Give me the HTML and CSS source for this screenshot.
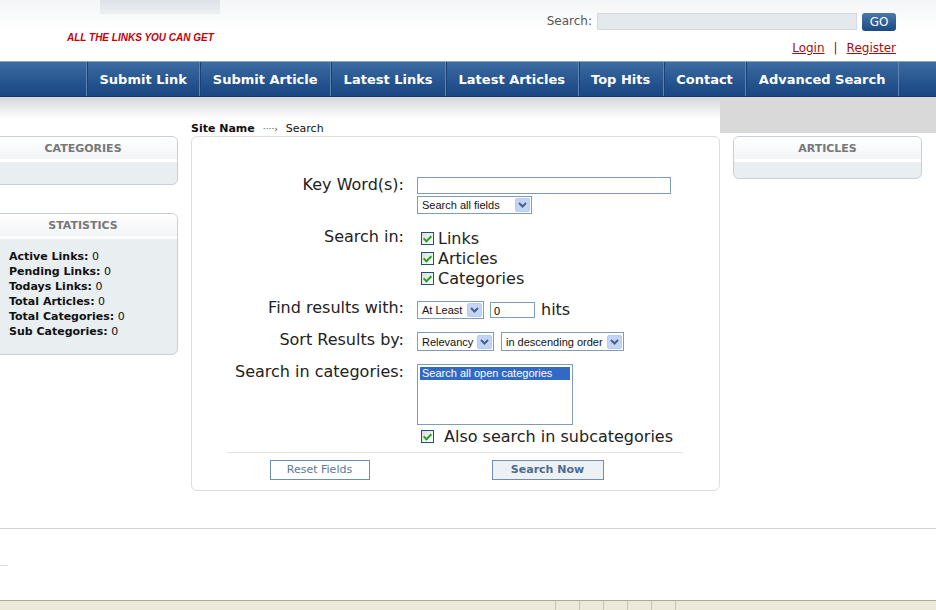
FILE: index.html
```html
<!DOCTYPE html>
<html lang="en">
<head>
  <meta charset="UTF-8" />
  <meta name="viewport" content="width=device-width, initial-scale=1.0" />
  <title>Search</title>
  <link rel="stylesheet" href="styles.css">
</head>
<body>
  <!-- ─── header ───────────────────────────── -->
  <div class="header">
    <div class="brand">
      <div class="brand-tab"></div>
      <div class="tagline">ALL THE LINKS YOU CAN GET</div>
    </div>
    <div class="top-right">
      <form class="quick-search">
        <label>Search:</label>
        <input type="text" class="quick-input">
        <button type="button" class="go-btn">GO</button>
      </form>
      <div class="account">
        <a href="#">Login</a><span class="pipe">|</span><a href="#">Register</a>
      </div>
    </div>
  </div>

  <!-- ─── navigation ───────────────────────── -->
  <div class="nav">
    <ul>
      <li><a href="#">Submit Link</a></li>
      <li><a href="#">Submit Article</a></li>
      <li><a href="#">Latest Links</a></li>
      <li><a href="#">Latest Articles</a></li>
      <li><a href="#">Top Hits</a></li>
      <li><a href="#">Contact</a></li>
      <li><a href="#">Advanced Search</a></li>
    </ul>
  </div>

  <!-- ─── content ──────────────────────────── -->
  <div class="content">
    <div class="left-col">
      <div class="side-box">
        <div class="side-head">CATEGORIES</div>
        <div class="side-body empty"></div>
      </div>
      <div class="side-box">
        <div class="side-head">STATISTICS</div>
        <div class="side-body stats">
          <div><b>Active Links:</b> 0</div>
          <div><b>Pending Links:</b> 0</div>
          <div><b>Todays Links:</b> 0</div>
          <div><b>Total Articles:</b> 0</div>
          <div><b>Total Categories:</b> 0</div>
          <div><b>Sub Categories:</b> 0</div>
        </div>
      </div>
    </div>

    <div class="main-col">
      <div class="crumbs"><b>Site Name</b><span class="arrow">····›</span>Search</div>
      <div class="main-box">
        <div class="row">
          <div class="label">Key Word(s):</div>
          <div class="field">
            <input type="text" class="text-input keywords">
            <div class="select fields-select"><span>Search all fields</span><i class="drop"></i></div>
          </div>
        </div>

        <div class="row search-in">
          <div class="label">Search in:</div>
          <div class="field">
            <div class="check-line"><span class="check"></span>Links</div>
            <div class="check-line"><span class="check"></span>Articles</div>
            <div class="check-line"><span class="check"></span>Categories</div>
          </div>
        </div>

        <div class="row find-row">
          <div class="label">Find results with:</div>
          <div class="field inline">
            <div class="select least-select"><span>At Least</span><i class="drop"></i></div>
            <input type="text" class="text-input hits-input" value="0">
            <span class="hits">hits</span>
          </div>
        </div>

        <div class="row sort-row">
          <div class="label">Sort Results by:</div>
          <div class="field inline">
            <div class="select rel-select"><span>Relevancy</span><i class="drop"></i></div>
            <div class="select order-select"><span>in descending order</span><i class="drop"></i></div>
          </div>
        </div>

        <div class="row cat-row">
          <div class="label">Search in categories:</div>
          <div class="field">
            <div class="listbox"><div class="option selected">Search all open categories</div></div>
            <div class="check-line sub-line"><span class="check"></span>Also search in subcategories</div>
          </div>
        </div>

        <div class="buttons">
          <div class="btn-cell"><button type="button" class="btn">Reset Fields</button></div>
          <div class="btn-cell wide"><button type="button" class="btn primary">Search Now</button></div>
        </div>
      </div>
    </div>

    <div class="right-col">
      <div class="right-band"></div>
      <div class="side-box articles">
        <div class="side-head">ARTICLES</div>
        <div class="side-body empty short"></div>
      </div>
    </div>
  </div>

  <div class="footer-rule"></div>
  <div class="stub-rule"></div>

  <!-- ─── browser status bar ───────────────── -->
  <div class="status-bar">
    <span class="pane grow"></span>
    <span class="pane"></span>
    <span class="pane"></span>
    <span class="pane"></span>
    <span class="pane"></span>
    <span class="pane"></span>
    <span class="pane last"></span>
  </div>
</body>
</html>
```

FILE: styles.css
```css
/* Reset */
* {
  margin: 0;
  padding: 0;
  box-sizing: border-box;
}

body {
  width: 936px;
  height: 610px;
  overflow: hidden;
  background: #fff;
  font-family: 'DejaVu Sans', Verdana, sans-serif;
  color: #111;
}

/* ─── header ───────────────────────────── */
.header {
  height: 61px;
  display: flex;
  justify-content: space-between;
  background: linear-gradient(#f3f5f7, #fff 30px);
}

.brand-tab {
  margin-left: 100px;
  width: 120px;
  height: 14px;
  background: linear-gradient(#dde2e7, #edf0f3);
}

.tagline {
  margin: 18px 0 0 67px;
  font-family: 'Liberation Sans', Arial, sans-serif;
  font-size: 10px;
  font-weight: bold;
  font-style: italic;
  color: #c4000b;
}

.top-right {
  padding: 12px 40px 0 0;
  display: flex;
  flex-direction: column;
  align-items: flex-end;
}

.quick-search {
  display: flex;
  align-items: center;
  height: 18px;
}

.quick-search label {
  font-size: 12px;
  color: #555;
  margin-right: 5px;
}

.quick-input {
  width: 260px;
  height: 17px;
  border: 1px solid #d4dae0;
  background: #e4e9ee;
  outline: none;
}

.go-btn {
  margin: 2px 0 0 5px;
  width: 34px;
  height: 18px;
  border: none;
  border-radius: 3px;
  background: linear-gradient(#4a78ab, #1c4a80);
  color: #fff;
  font-family: 'DejaVu Sans', Verdana, sans-serif;
  font-size: 12px;
}

.account {
  margin-top: 11px;
  font-size: 12px;
  color: #a00;
}

.account a {
  color: #a01010;
}

.pipe {
  margin: 0 9px;
}

/* ─── navigation ───────────────────────── */
.nav {
  height: 36px;
  border-top: 1px solid #8ea6c0;
  background: linear-gradient(#3d6ca4, #21508a 70%, #1c4781);
  border-bottom: 1px solid #163a6a;
}

.nav ul {
  list-style: none;
  display: flex;
  height: 100%;
  margin-left: 86px;
}

.nav li {
  border-left: 1px solid #5e84b0;
  box-shadow: inset 1px 0 0 #1a4172;
  display: flex;
  align-items: center;
}

.nav li:last-child {
  border-right: 1px solid #5e84b0;
}

.nav a {
  padding: 0 12.5px;
  color: #fff;
  font-size: 13px;
  font-weight: bold;
  text-decoration: none;
}

/* ─── content columns ──────────────────── */
.content {
  display: flex;
  background: linear-gradient(#d4d6d8, #fff 22px);
  margin-left: -12px;
}

.left-col {
  width: 190px;
  padding-top: 39px;
}

.main-col {
  width: 529px;
  margin-left: 13px;
  padding-top: 22px;
  background: linear-gradient(#d4d6d8, #fff 22px);
}

.right-col {
  width: 216px;
}

.right-band {
  height: 36px;
  background: #d9d9d9;
}

/* ─── side boxes ───────────────────────── */
.side-box {
  border: 1px solid #c8cfd4;
  border-radius: 6px;
  background: #e9eef1;
  overflow: hidden;
  margin-bottom: 28px;
}

.side-head {
  height: 25px;
  padding-top: 5px;
  text-align: center;
  font-size: 11px;
  font-weight: bold;
  color: #777;
  background: linear-gradient(#fff, #f2f4f6);
  border-bottom: 3px solid #fff;
}

.side-body.empty {
  height: 22px;
}

.side-body.short {
  height: 16px;
}

.stats {
  padding: 10px 0 15px 20px;
  font-size: 11px;
  line-height: 15px;
}

.articles {
  margin: 3px 14px 0 13px;
}

/* ─── breadcrumb ───────────────────────── */
.crumbs {
  height: 17px;
  padding-top: 3px;
  font-size: 11px;
}

.crumbs .arrow {
  margin: 0 8px;
  font-size: 9px;
  color: #444;
}

/* ─── search form ──────────────────────── */
.main-box {
  height: 355px;
  border: 1px solid #ddd;
  border-radius: 6px;
  padding: 40px 0 0 35px;
}

.row {
  display: flex;
  width: 456px;
}

.label {
  width: 185px;
  padding-right: 8px;
  text-align: right;
  font-size: 16px;
  line-height: 18px;
  color: #222;
  margin-top: -1px;
}

.field {
  padding-left: 5px;
}

.field.inline {
  display: flex;
  align-items: center;
}

.text-input {
  display: block;
  height: 17px;
  border: 1px solid #7f9db9;
  font-family: 'Liberation Sans', Arial, sans-serif;
  font-size: 11px;
  padding: 2px 3px 0;
  outline: none;
}

.keywords {
  width: 254px;
}

.hits-input {
  width: 45px;
  height: 16px;
  margin-left: 6px;
}

.hits {
  margin-left: 6px;
  font-size: 16px;
  color: #222;
}

.select {
  display: flex;
  align-items: center;
  justify-content: space-between;
  height: 18px;
  border: 1px solid #7f9db9;
  background: #fff;
  font-family: 'Liberation Sans', Arial, sans-serif;
  font-size: 11px;
  color: #111;
  padding: 0 1px 0 4px;
}

.select .drop {
  width: 15px;
  height: 14px;
  border: 1px solid #b7cbf3;
  border-radius: 2px;
  background: #c3d4f9 url("data:image/svg+xml,%3Csvg xmlns='http://www.w3.org/2000/svg' width='9' height='6'%3E%3Cpath d='M1 1l3.5 3.5L8 1' fill='none' stroke='%234d6185' stroke-width='2'/%3E%3C/svg%3E") center no-repeat;
}

.fields-select { width: 115px; margin-top: 2px; }
.least-select { width: 67px; }
.rel-select { width: 77px; height: 19px; }
.order-select { width: 123px; height: 19px; margin-left: 7px; }

.search-in {
  margin-top: 14px;
}

.search-in .label {
  margin-top: 0;
}

.check-line {
  display: flex;
  align-items: center;
  height: 20px;
  font-size: 16px;
  color: #222;
}

.check {
  width: 13px;
  height: 13px;
  margin: 0 4px 0 4px;
  border: 1px solid #1c5180;
  background: linear-gradient(135deg, #dcdcd7, #fff) ;
  position: relative;
}

.check::after {
  content: "";
  position: absolute;
  left: 3px;
  top: 1px;
  width: 3px;
  height: 6px;
  border: solid #21a121;
  border-width: 0 2px 2px 0;
  transform: rotate(45deg);
}

.find-row {
  margin-top: 12px;
}

.sort-row {
  margin-top: 13px;
}

.cat-row {
  margin-top: 13px;
}

.listbox {
  width: 156px;
  height: 61px;
  border: 1px solid #7f9db9;
  padding: 2px;
  font-family: 'Liberation Sans', Arial, sans-serif;
  font-size: 11px;
}

.option {
  height: 13px;
  line-height: 13px;
  padding-left: 2px;
}

.option.selected {
  background: #316ac5;
  color: #fff;
}

.sub-line {
  margin-top: 1px;
}

.sub-line .check {
  margin-right: 10px;
}

.buttons {
  display: flex;
  width: 456px;
  margin-top: 6px;
  padding-top: 5px;
  border-top: 1px solid #e2e2e2;
}

.btn-cell {
  width: 185px;
  text-align: center;
}

.btn-cell.wide {
  width: 271px;
}

.btn {
  height: 20px;
  border: 1px solid #6e8fae;
  background: #fff;
  color: #5b7894;
  font-family: 'DejaVu Sans', Verdana, sans-serif;
  font-size: 11px;
}

.btn-cell:first-child .btn {
  width: 100px;
}

.btn.primary {
  width: 112px;
  background: #eef1f4;
  font-weight: bold;
  color: #4d6c8b;
}

/* ─── footer ───────────────────────────── */
.footer-rule {
  margin-top: 37px;
  border-top: 1px solid #d2d2d2;
}

.stub-rule {
  margin-top: 36px;
  width: 8px;
  border-top: 1px solid #d8d8d8;
}

.status-bar {
  margin-top: 34px;
  height: 10px;
  display: flex;
  border-top: 1px solid #a9a69a;
  background: #ece9d8;
}

.pane {
  width: 24px;
  border-left: 1px solid #c9c5b5;
}

.pane.grow {
  flex: none;
  width: 555px;
  border-left: none;
}

.pane.last {
  flex: 1;
}
```
